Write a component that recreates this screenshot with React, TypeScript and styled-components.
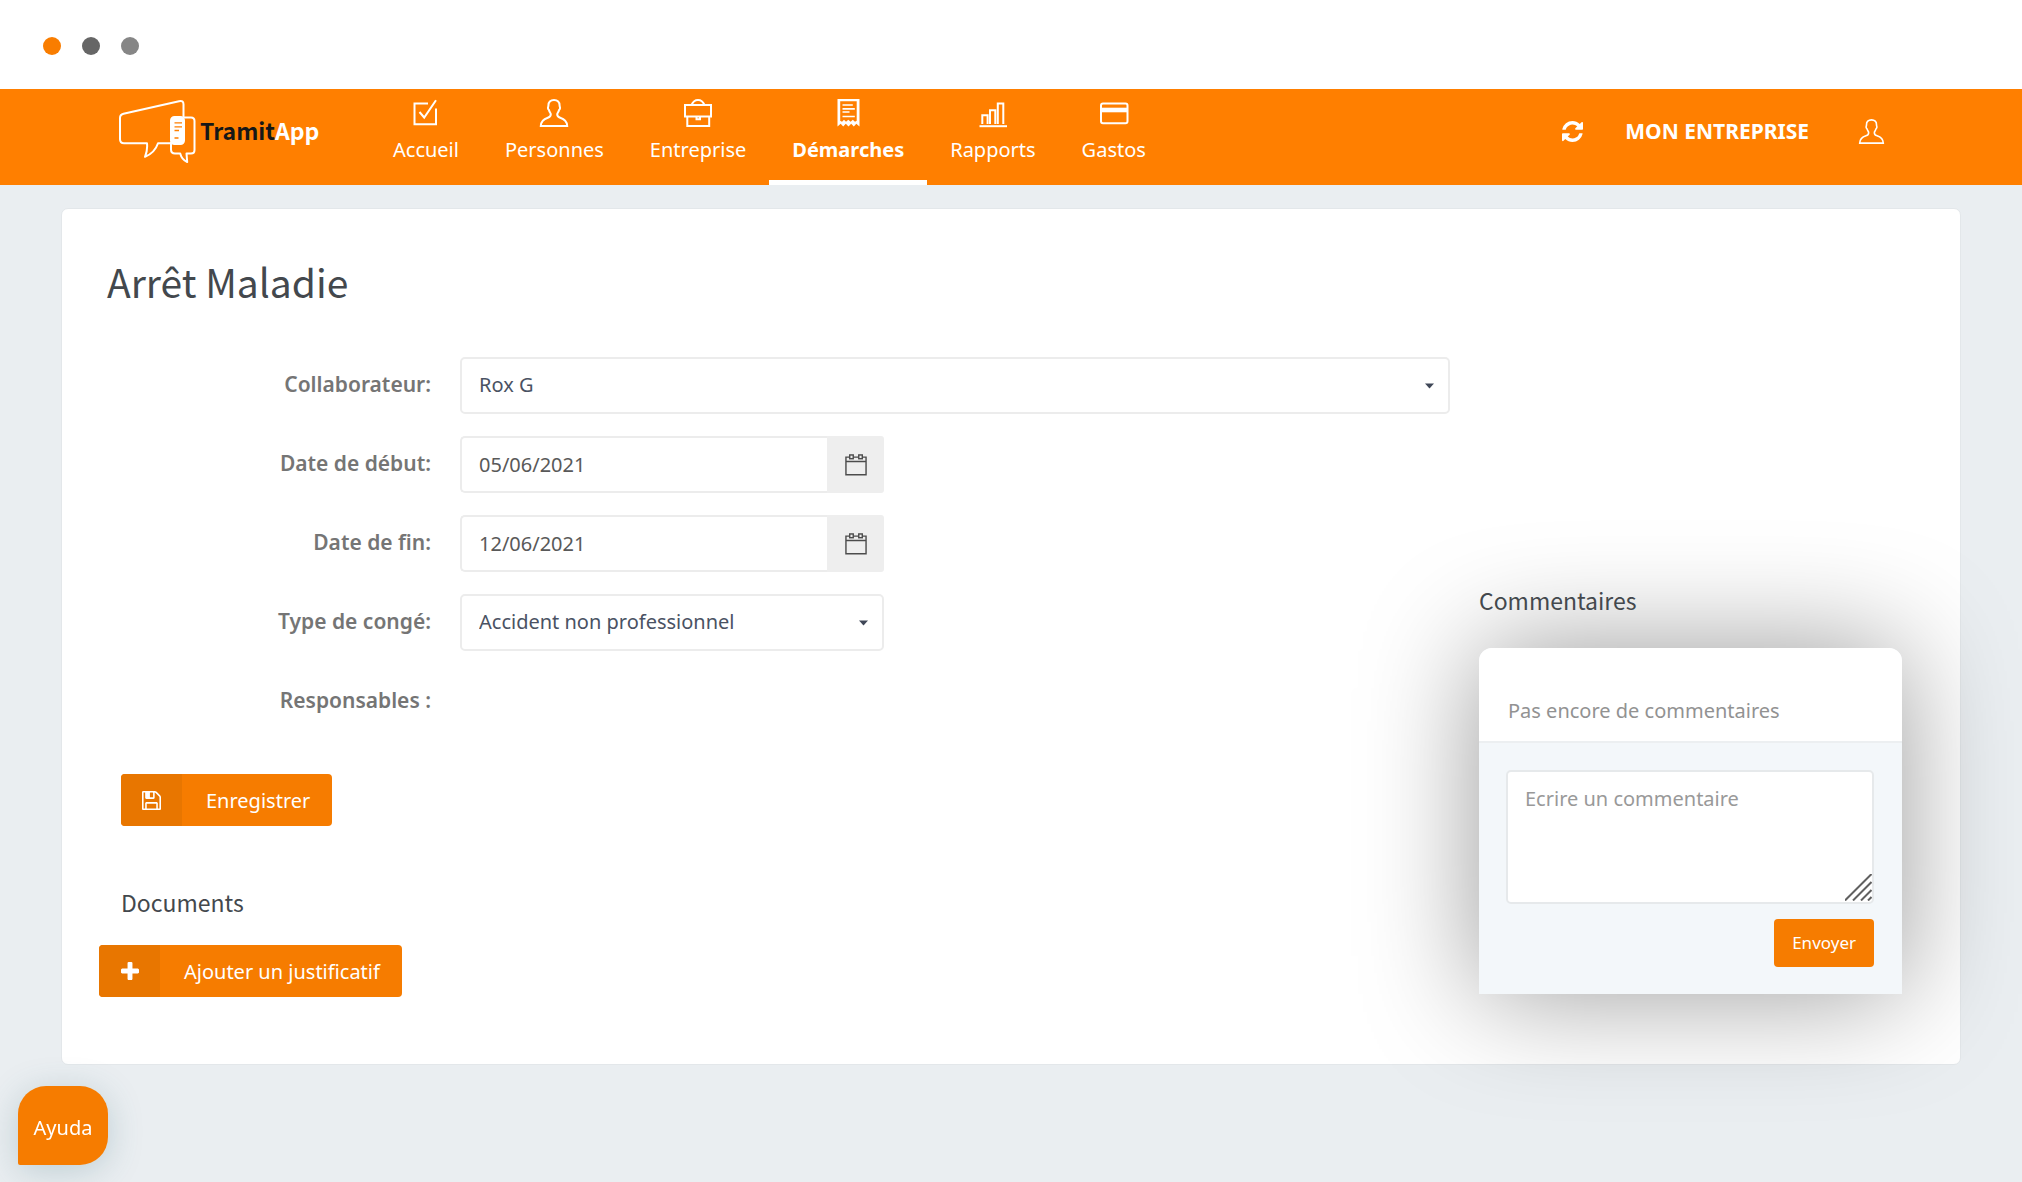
import React from "react";
import styled, { createGlobalStyle, css } from "styled-components";

const color = {
  brand: "#ff7f00",
  button: "#f67c00",
  buttonDark: "#e87600",
  page: "#eaeef1",
  text: "#43484d",
  label: "#757575",
  field: "#4a5263",
  muted: "#929292",
  line: "#ececec",
};

const bodyFont = '"Noto Sans", "Open Sans", sans-serif';
const headingFont = '"Noto Sans CJK SC", "Noto Sans", sans-serif';

const GlobalStyle = createGlobalStyle`
  *, *::before, *::after { box-sizing: border-box; }
  body {
    margin: 0;
    background: ${color.page};
    color: ${color.text};
    font-family: ${bodyFont};
    font-size: 20px;
    line-height: 28px;
  }
  button, input, select, textarea { font: inherit; color: inherit; margin: 0; }
  h1, h2, p { margin: 0; }
`;

const Page = styled.div`
  display: flex;
  flex-direction: column;
  min-height: 100vh;
  overflow: hidden;
`;

const WindowBar = styled.div`
  display: flex;
  align-items: center;
  gap: 21px;
  height: 89px;
  padding: 2px 43px 0;
  background: #fff;
`;

const Dot = styled.span<{ $fill: string }>`
  width: 18px;
  height: 18px;
  border-radius: 50%;
  background: ${(p) => p.$fill};
`;

const Header = styled.header`
  display: flex;
  align-items: stretch;
  height: 96px;
  padding: 0 138px 0 119px;
  background: ${color.brand};
  color: #fff;
`;

const Logo = styled.a`
  display: flex;
  align-items: flex-start;
  gap: 4px;
  width: 251px;
  padding-top: 11px;
  color: #fff;
  font-family: ${headingFont};
  font-size: 23px;
  font-weight: 700;
  line-height: 60px;
  text-decoration: none;
`;

const LogoDark = styled.span`
  color: #171717;
`;

const Nav = styled.nav`
  display: flex;
`;

const NavLink = styled.a<{ $active?: boolean }>`
  display: flex;
  flex-direction: column;
  align-items: center;
  gap: 9px;
  padding: 10px 23px 0;
  border-bottom: 5px solid transparent;
  color: #fff;
  text-decoration: none;
  ${(p) =>
    p.$active &&
    css`
      border-bottom-color: #fff;
      font-weight: 700;
    `}
`;

const Tools = styled.div`
  display: flex;
  align-items: center;
  margin-left: auto;
  padding-bottom: 12px;
`;

const IconButton = styled.button`
  display: flex;
  padding: 0;
  border: 0;
  background: none;
  color: #fff;
`;

const Company = styled.a`
  margin: 0 50px 0 42px;
  color: #fff;
  font-size: 21px;
  font-weight: 700;
  text-decoration: none;
`;

const Card = styled.main`
  display: grid;
  grid-template-columns: minmax(0, 1fr) 423px;
  column-gap: 29px;
  margin: 23px 61px 0;
  padding: 46px 58px 67px 37px;
  border: 1px solid #e3e7ea;
  border-radius: 7px;
  background: #fff;
`;

const Title = styled.h1`
  grid-column: 1 / -1;
  margin-bottom: 50px;
  padding-left: 8px;
  font-family: ${headingFont};
  font-size: 39px;
  font-weight: 400;
  line-height: 52px;
`;

const Form = styled.form`
  display: flex;
  flex-direction: column;
  align-items: flex-start;
`;

const Fields = styled.div`
  display: flex;
  flex-direction: column;
  align-self: stretch;
  gap: 22px;
`;

const Row = styled.div`
  display: grid;
  grid-template-columns: 332px minmax(0, 1fr);
  column-gap: 29px;
  align-items: center;
  min-height: 57px;
`;

const Label = styled.label`
  padding-bottom: 3px;
  color: ${color.label};
  font-size: 21px;
  font-weight: 600;
  text-align: right;
`;

const FieldBox = styled.div<{ $short?: boolean }>`
  position: relative;
  display: flex;
  width: 100%;
  max-width: ${(p) => (p.$short ? "424px" : "none")};
`;

const fieldStyle = css`
  width: 100%;
  height: 57px;
  padding: 0 17px;
  border: 2px solid ${color.line};
  border-radius: 5px;
  background: #fff;
  outline: none;
`;

const Select = styled.select`
  ${fieldStyle}
  padding-bottom: 2px;
  appearance: none;
  color: ${color.field};
`;

const Caret = styled.svg`
  position: absolute;
  top: 26px;
  right: 16px;
  pointer-events: none;
`;

const DateInput = styled.input`
  ${fieldStyle}
  flex: 1;
  border-right-width: 0;
  border-radius: 5px 0 0 5px;
  color: #595959;
`;

const DateButton = styled.button`
  display: flex;
  align-items: center;
  justify-content: center;
  width: 57px;
  padding: 0;
  border: 0;
  border-radius: 0 3px 3px 0;
  background: #eeeeee;
  color: #4c4c4c;
`;

const ActionButton = styled.button<{ $inset?: boolean }>`
  display: flex;
  align-items: stretch;
  height: 52px;
  margin-left: ${(p) => (p.$inset ? "22px" : "0")};
  padding: 0;
  border: 0;
  border-radius: 4px;
  background: ${color.button};
  color: #fff;
  overflow: hidden;
`;

const ActionIcon = styled.span`
  display: flex;
  align-items: center;
  justify-content: center;
  width: 61px;
  background: ${color.buttonDark};
`;

const ActionText = styled.span`
  padding: 13px 22px 0 24px;
`;

const SubHeading = styled.h2`
  font-family: ${headingFont};
  font-size: 23px;
  font-weight: 400;
  line-height: 36px;
`;

const SaveArea = styled.div`
  padding: 44px 0 58px;
`;

const DocumentsHeading = styled(SubHeading)`
  margin-bottom: 25px;
  padding-left: 22px;
`;

const Comments = styled.section`
  align-self: end;
  padding-bottom: 3px;
`;

const CommentBox = styled.div`
  margin-top: 30px;
  border-radius: 13px 13px 0 0;
  box-shadow: 0 0 116px rgba(0, 0, 0, 0.4);
  background: #f3f7fa;
`;

const CommentList = styled.div`
  padding: 49px 29px 16px;
  border-bottom: 2px solid #eceff1;
  border-radius: 13px 13px 0 0;
  background: #fff;
  color: ${color.muted};
`;

const CommentForm = styled.form`
  display: flex;
  flex-direction: column;
  align-items: flex-end;
  gap: 15px;
  padding: 27px 28px 27px 27px;
`;

const CommentField = styled.div`
  position: relative;
  display: flex;
  align-self: stretch;
`;

const TextArea = styled.textarea`
  width: 100%;
  height: 134px;
  padding: 13px 17px;
  border: 2px solid #e6e9eb;
  border-radius: 5px;
  background: #fff;
  resize: none;
  outline: none;
  &::placeholder { color: #999; opacity: 1; }
`;

const Grip = styled.svg`
  position: absolute;
  right: 2px;
  bottom: 3px;
  pointer-events: none;
`;

const SendButton = styled.button`
  height: 48px;
  padding: 0 18px;
  border: 0;
  border-radius: 4px;
  background: ${color.button};
  color: #fff;
  font-size: 17px;
`;

const HelpButton = styled.button`
  position: fixed;
  left: 18px;
  bottom: 17px;
  width: 90px;
  height: 79px;
  padding: 4px 0 0;
  border: 0;
  border-radius: 28px 28px 28px 2px;
  background: ${color.button};
  box-shadow: 0 6px 34px rgba(60, 110, 125, 0.25);
  color: #fff;
`;

const LineIcon = ({ size = 28, width = 2, children }: { size?: number; width?: number; children: React.ReactNode }) => (
  <svg width={size} height={size} viewBox="0 0 28 28" fill="none" stroke="currentColor" strokeWidth={width} overflow="visible" aria-hidden="true">
    {children}
  </svg>
);

const CheckIcon = () => (
  <LineIcon>
    <path d="M16 4.5H2.5v20.700h21.500V9.500" />
    <path d="M24 1.300L12.200 18.500L7.500 13" />
  </LineIcon>
);

const personPath =
  "M14 1c-3.500 0-5.800 2-5.600 5.500c0 1.200-.6 1.500-.4 2.800c.2 1.200 1 1.400 1.200 2.400c.3 1.500 1.600 2.300 1.600 3.600c0 2.200-.8 2.800-3 3.500C4 20 1 22.200.8 27h26.400c-.2-4.800-3.200-7-7-8.200c-2.200-.7-3-1.300-3-3.500c0-1.300 1.300-2.100 1.600-3.600c.2-1 1-1.200 1.200-2.400c.2-1.300-.4-1.600-.4-2.800C19.800 3 17.500 1 14 1z";

const BriefcaseIcon = () => (
  <LineIcon>
    <path d="M1 6h26v11.500H1zM3.300 17.500V27h21.900V17.500M7.500 6C9 2.500 11 1 14 1s5 1.500 6.500 5" />
    <path d="M12.500 17.500v2.700h3.500v-2.700" />
  </LineIcon>
);

const ReceiptIcon = () => (
  <LineIcon>
    <path d="M3.500 0h22v27.500l-3.200-2.800l-2.500 2.800l-2.600-2.800l-2.700 2.800l-2.700-2.800l-2.600 2.800l-2.500-2.800l-3.200 2.800zM6.200 2.300v19.500l1.800 1l2-2l2 2l2.300-2l2.300 2l2.200-2l2.200 2l1.700-1V2.300z" fill="currentColor" fillRule="evenodd" stroke="none" />
    <path d="M8.500 6h10.300M8.500 9.800h12.300M8.500 13h7M8.500 17.500h12.300" strokeWidth="1.700" />
  </LineIcon>
);

const ChartIcon = () => (
  <LineIcon width={2}>
    <path d="M.5 27.200h27.500" />
    <path d="M3.300 25V16.300h5.300V25M11 25V11.300h5.300V25M18.800 25V4.500h5.500V25" />
  </LineIcon>
);

const CreditCardIcon = () => (
  <LineIcon>
    <rect x="1" y="4.500" width="26.500" height="19.800" rx="2" />
    <path d="M1 11h26.500" strokeWidth="4.600" />
  </LineIcon>
);

const CalendarIcon = () => (
  <LineIcon size={22} width={1.800}>
    <path d="M6 4H1.200v22.500h25.600V4H22M11 4h6M1 9.500h26" />
    <rect x="6" y="1.200" width="4.500" height="4.800" />
    <rect x="17.500" y="1.200" width="4.500" height="4.800" />
  </LineIcon>
);

const SolidIcon = ({ size, box, d }: { size: number; box: string; d: string }) => (
  <svg width={size} height={size} viewBox={box} fill="currentColor" aria-hidden="true">
    <path d={d} />
  </svg>
);

const refreshPath =
  "M1511 928q0 5-1 7-64 268-268 434.500t-478 166.500q-146 0-282.500-55t-243.500-157l-129 129q-19 19-45 19t-45-19-19-45v-448q0-26 19-45t45-19h448q26 0 45 19t19 45-19 45l-137 137q71 66 161 102t187 36q134 0 250-65t186-179q11-17 53-117 8-23 30-23h192q13 0 22.500 9.500t9.500 22.500zm25-800v448q0 26-19 45t-45 19h-448q-26 0-45-19t-19-45 19-45l138-138q-148-137-349-137-134 0-250 65t-186 179q-11 17-53 117-8 23-30 23h-199q-13 0-22.500-9.500t-9.500-22.500v-7q65-268 270-434.500t480-166.500q146 0 284 55.500t245 156.500l130-129q19-19 45-19t45 19 19 45z";
const savePath =
  "M384 1536h768v-384h-768v384zm896 0h128v-896q0-14-10-38.500t-20-34.500l-281-281q-10-10-34-20t-39-10v416q0 40-28 68t-68 28h-576q-40 0-68-28t-28-68v-416h-128v1280h128v-416q0-40 28-68t68-28h832q40 0 68 28t28 68v416zm-384-928v-320q0-13-9.500-22.500t-22.500-9.500h-192q-13 0-22.500 9.500t-9.500 22.500v320q0 13 9.500 22.500t22.500 9.500h192q13 0 22.500-9.500t9.500-22.500zm640 32v928q0 40-28 68t-68 28h-1344q-40 0-68-28t-28-68v-1344q0-40 28-68t68-28h928q40 0 88 20t76 48l280 280q28 28 48 76t20 88z";
const plusPath =
  "M1408 800v192q0 40-28 68t-68 28h-416v416q0 40-28 68t-68 28h-192q-40 0-68-28t-28-68v-416h-416q-40 0-68-28t-28-68v-192q0-40 28-68t68-28h416v-416q0-40 28-68t68-28h192q40 0 68 28t28 68v416h416q40 0 68 28t28 68z";

const LogoMark = () => (
  <svg width="77" height="64" viewBox="0 0 77 64" fill="none" stroke="#fff" strokeWidth="2" strokeLinejoin="round" aria-hidden="true">
    <path d="M52 43.300H39c-2 6-6.500 11-13 13.500c2-4.500 2.500-8.500 2-13.500H5q-4 0-4-4V18q0-3.500 3.500-4.300L60 1.200q4.500-1 4.500 3V17.500" />
    <path d="M64.500 17.500h7.500q3.500 0 3.500 3.500v29q0 3.500-3.500 3.500h-4.500l.7 8.500c-3.500-1.500-6-4.500-7-8.500H56q-4 0-4-4V42" />
    <rect x="52" y="17" width="13" height="27" rx="3.500" fill="#fff" />
    <path d="M55.500 22.800h7.500M55.500 26.800h7.500M55.500 30.500h4.500M55.500 38h4" stroke={color.brand} strokeWidth="1.300" />
  </svg>
);

const DropCaret = () => (
  <Caret width="9" height="6" viewBox="0 0 9 6" aria-hidden="true">
    <path d="M0 .5h9L4.500 5.500z" fill="#3f4757" />
  </Caret>
);

const navItems = [
  { label: "Accueil", icon: <CheckIcon /> },
  { label: "Personnes", icon: <LineIcon><path d={personPath} /></LineIcon> },
  { label: "Entreprise", icon: <BriefcaseIcon /> },
  { label: "Démarches", icon: <ReceiptIcon />, active: true },
  { label: "Rapports", icon: <ChartIcon /> },
  { label: "Gastos", icon: <CreditCardIcon /> },
];

const DateRow = ({ id, label, value }: { id: string; label: string; value: string }) => (
  <Row>
    <Label htmlFor={id}>{label}</Label>
    <FieldBox $short>
      <DateInput id={id} type="text" defaultValue={value} />
      <DateButton type="button" aria-label={label}>
        <CalendarIcon />
      </DateButton>
    </FieldBox>
  </Row>
);

const SelectRow = ({ id, label, value, short }: { id: string; label: string; value: string; short?: boolean }) => (
  <Row>
    <Label htmlFor={id}>{label}</Label>
    <FieldBox $short={short}>
      <Select id={id} defaultValue={value}>
        <option>{value}</option>
      </Select>
      <DropCaret />
    </FieldBox>
  </Row>
);

export default function App() {
  return (
    <Page>
      <GlobalStyle />
      <WindowBar>
        <Dot $fill="#f97d00" />
        <Dot $fill="#666666" />
        <Dot $fill="#868686" />
      </WindowBar>
      <Header>
        <Logo href="#">
          <LogoMark />
          <span>
            <LogoDark>Tramit</LogoDark>App
          </span>
        </Logo>
        <Nav>
          {navItems.map((item) => (
            <NavLink key={item.label} href="#" $active={item.active}>
              {item.icon}
              {item.label}
            </NavLink>
          ))}
        </Nav>
        <Tools>
          <IconButton type="button" aria-label="Actualiser">
            <SolidIcon size={21} box="0 0 1536 1536" d={refreshPath} />
          </IconButton>
          <Company href="#">MON ENTREPRISE</Company>
          <IconButton type="button" aria-label="Compte">
            <LineIcon size={25} width={1.800}><path d={personPath} /></LineIcon>
          </IconButton>
        </Tools>
      </Header>
      <Card>
        <Title>Arrêt Maladie</Title>
        <Form>
          <Fields>
            <SelectRow id="employee" label="Collaborateur:" value="Rox G" />
            <DateRow id="start" label="Date de début:" value="05/06/2021" />
            <DateRow id="end" label="Date de fin:" value="12/06/2021" />
            <SelectRow id="type" label="Type de congé:" value="Accident non professionnel" short />
            <Row>
              <Label as="span">Responsables :</Label>
            </Row>
          </Fields>
          <SaveArea>
            <ActionButton type="button" $inset>
              <ActionIcon>
                <SolidIcon size={19} box="0 128 1536 1536" d={savePath} />
              </ActionIcon>
              <ActionText>Enregistrer</ActionText>
            </ActionButton>
          </SaveArea>
          <DocumentsHeading>Documents</DocumentsHeading>
          <ActionButton type="button">
            <ActionIcon>
              <SolidIcon size={18} box="0 192 1408 1408" d={plusPath} />
            </ActionIcon>
            <ActionText>Ajouter un justificatif</ActionText>
          </ActionButton>
        </Form>
        <Comments>
          <SubHeading>Commentaires</SubHeading>
          <CommentBox>
            <CommentList>Pas encore de commentaires</CommentList>
            <CommentForm>
              <CommentField>
                <TextArea aria-label="Ecrire un commentaire" placeholder="Ecrire un commentaire" />
                <Grip width="27" height="27" viewBox="0 0 27 27" stroke="#606060" strokeWidth="2" aria-hidden="true">
                  <path d="M0 26.500L26.500 0M8 26.500L26.500 8M16 26.500L26.500 16M23 26.500L26.500 23" />
                </Grip>
              </CommentField>
              <SendButton type="button">Envoyer</SendButton>
            </CommentForm>
          </CommentBox>
        </Comments>
      </Card>
      <HelpButton type="button">Ayuda</HelpButton>
    </Page>
  );
}
